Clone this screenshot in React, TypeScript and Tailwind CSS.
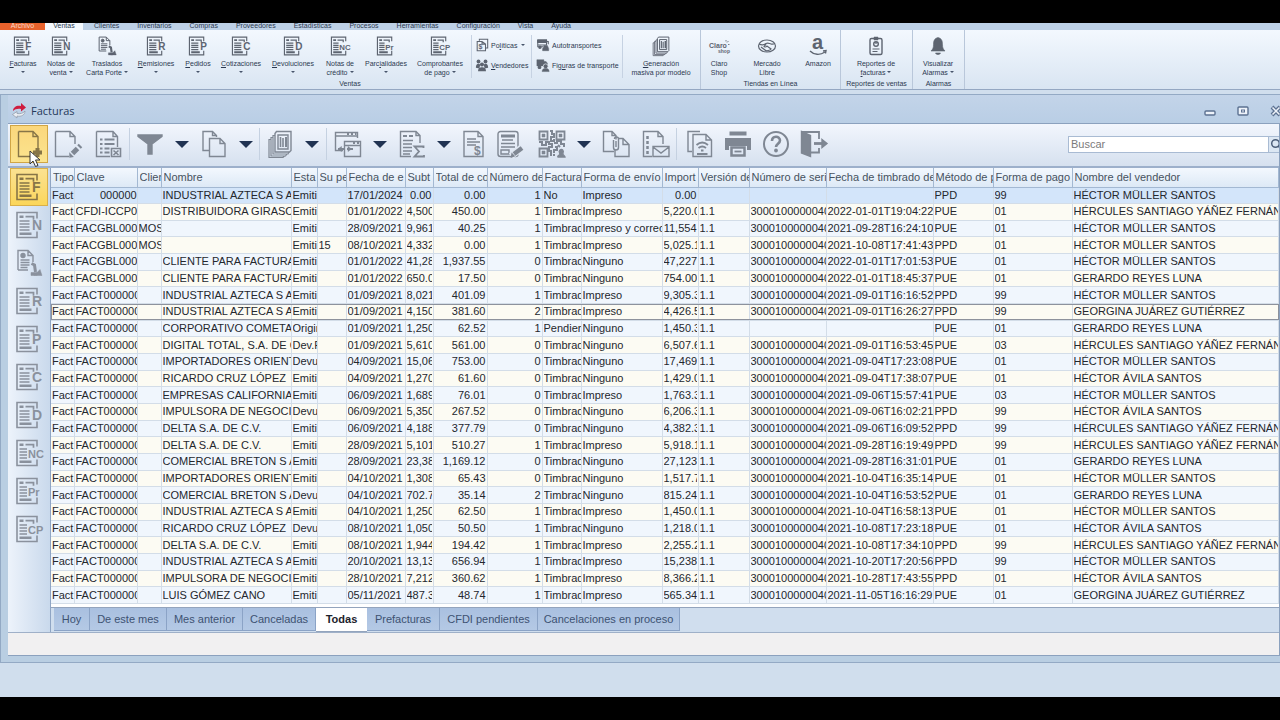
import React from 'react';

const VERSION = '1.1';
const SERIE = '30001000000400';
const MULLER = 'HÉCTOR MÜLLER SANTOS';
const AVILA = 'HÉCTOR ÁVILA SANTOS';
const YANEZ = 'HÉRCULES SANTIAGO YÁÑEZ FERNÁN';
const LUNA = 'GERARDO REYES LUNA';
const JUAREZ = 'GEORGINA JUÁREZ GUTIÉRREZ';
const CLAVE = 'FACT000000';

const columns = [
  { label: 'Tipo', width: 'w-[23px]' },
  { label: 'Clave', width: 'w-[63px]' },
  { label: 'Clien', width: 'w-[24px]' },
  { label: 'Nombre', width: 'w-[130px]' },
  { label: 'Esta', width: 'w-[26px]' },
  { label: 'Su pe', width: 'w-[29px]' },
  { label: 'Fecha de e', width: 'w-[59px]' },
  { label: 'Subt', width: 'w-[28px]', right: true },
  { label: 'Total de co', width: 'w-[54px]', right: true },
  { label: 'Número de', width: 'w-[55px]', right: true },
  { label: 'Factura', width: 'w-[39px]' },
  { label: 'Forma de envío d', width: 'w-[81px]' },
  { label: 'Import', width: 'w-[36px]', right: true },
  { label: 'Versión de', width: 'w-[51px]' },
  { label: 'Número de serie', width: 'w-[77px]' },
  { label: 'Fecha de timbrado de', width: 'w-[107px]' },
  { label: 'Método de p', width: 'w-[60px]' },
  { label: 'Forma de pago', width: 'w-[79px]' },
  { label: 'Nombre del vendedor', width: '' },
];

// clave, cliente, nombre, estatus, pedido, fecha, subtotal, comisiones, almacén, factura, envío, importe, versión, serie, timbrado, método, forma, vendedor
const rows: string[][] = [
  ['        000000', '', 'INDUSTRIAL AZTECA S A', 'Emiti', '', '17/01/2024', '0.00', '0.00', '1', 'No', 'Impreso', '0.00', '', '', '', 'PPD', '99', MULLER],
  ['CFDI-ICCP0', '', 'DISTRIBUIDORA GIRASO', 'Emiti', '', '01/01/2022', '4,500', '450.00', '1', 'Timbrad', 'Impreso', '5,220.0', VERSION, SERIE, '2022-01-01T19:04:22', 'PUE', '01', YANEZ],
  ['FACGBL000', 'MOS', '', 'Emiti', '', '28/09/2021', '9,961', '40.25', '1', 'Timbrad', 'Impreso y correo', '11,554', VERSION, SERIE, '2021-09-28T16:24:10', 'PUE', '01', MULLER],
  ['FACGBL000', 'MOS', '', 'Emiti', '15', '08/10/2021', '4,332', '0.00', '1', 'Timbrad', 'Impreso', '5,025.1', VERSION, SERIE, '2021-10-08T17:41:43', 'PPD', '01', MULLER],
  ['FACGBL000', '', 'CLIENTE PARA FACTURA', 'Emiti', '', '01/01/2022', '41,28', '1,937.55', '0', 'Timbrad', 'Ninguno', '47,227', VERSION, SERIE, '2022-01-01T17:01:53', 'PUE', '01', MULLER],
  ['FACGBL000', '', 'CLIENTE PARA FACTURA', 'Emiti', '', '01/01/2022', '650.0', '17.50', '0', 'Timbrad', 'Ninguno', '754.00', VERSION, SERIE, '2022-01-01T18:45:37', 'PUE', '01', LUNA],
  [CLAVE, '', 'INDUSTRIAL AZTECA S A', 'Emiti', '', '01/09/2021', '8,021', '401.09', '1', 'Timbrad', 'Impreso', '9,305.3', VERSION, SERIE, '2021-09-01T16:16:52', 'PPD', '99', MULLER],
  [CLAVE, '', 'INDUSTRIAL AZTECA S A', 'Emiti', '', '01/09/2021', '4,150', '381.60', '2', 'Timbrad', 'Impreso', '4,426.5', VERSION, SERIE, '2021-09-01T16:26:27', 'PPD', '99', JUAREZ],
  [CLAVE, '', 'CORPORATIVO COMETA', 'Origin', '', '01/09/2021', '1,250', '62.52', '1', 'Pendien', 'Ninguno', '1,450.3', VERSION, '', '', 'PUE', '01', LUNA],
  [CLAVE, '', 'DIGITAL TOTAL, S.A. DE C', 'Dev.P', '', '01/09/2021', '5,610', '561.00', '0', 'Timbrad', 'Ninguno', '6,507.6', VERSION, SERIE, '2021-09-01T16:53:45', 'PUE', '03', YANEZ],
  [CLAVE, '', 'IMPORTADORES ORIENT', 'Devu', '', '04/09/2021', '15,06', '753.00', '0', 'Timbrad', 'Ninguno', '17,469', VERSION, SERIE, '2021-09-04T17:23:08', 'PUE', '01', MULLER],
  [CLAVE, '', 'RICARDO CRUZ LÓPEZ', 'Emiti', '', '04/09/2021', '1,270', '61.60', '0', 'Timbrad', 'Ninguno', '1,429.0', VERSION, SERIE, '2021-09-04T17:38:07', 'PUE', '01', AVILA],
  [CLAVE, '', 'EMPRESAS CALIFORNIA', 'Emiti', '', '06/09/2021', '1,689', '76.01', '0', 'Timbrad', 'Impreso', '1,763.3', VERSION, SERIE, '2021-09-06T15:57:41', 'PUE', '03', MULLER],
  [CLAVE, '', 'IMPULSORA DE NEGOCI', 'Devu', '', '06/09/2021', '5,350', '267.52', '0', 'Timbrad', 'Ninguno', '6,206.3', VERSION, SERIE, '2021-09-06T16:02:21', 'PPD', '99', AVILA],
  [CLAVE, '', 'DELTA S.A. DE C.V.', 'Emiti', '', '06/09/2021', '4,188', '377.79', '0', 'Timbrad', 'Ninguno', '4,382.3', VERSION, SERIE, '2021-09-06T16:09:52', 'PPD', '99', YANEZ],
  [CLAVE, '', 'DELTA S.A. DE C.V.', 'Emiti', '', '28/09/2021', '5,101', '510.27', '1', 'Timbrad', 'Impreso', '5,918.1', VERSION, SERIE, '2021-09-28T16:19:49', 'PPD', '99', YANEZ],
  [CLAVE, '', 'COMERCIAL BRETON S A', 'Emiti', '', '28/09/2021', '23,38', '1,169.12', '0', 'Timbrad', 'Ninguno', '27,123', VERSION, SERIE, '2021-09-28T16:31:01', 'PUE', '01', LUNA],
  [CLAVE, '', 'IMPORTADORES ORIENT', 'Emiti', '', '04/10/2021', '1,308', '65.43', '0', 'Timbrad', 'Ninguno', '1,517.7', VERSION, SERIE, '2021-10-04T16:35:14', 'PUE', '01', MULLER],
  [CLAVE, '', 'COMERCIAL BRETON S A', 'Devu', '', '04/10/2021', '702.7', '35.14', '2', 'Timbrad', 'Ninguno', '815.24', VERSION, SERIE, '2021-10-04T16:53:52', 'PUE', '01', LUNA],
  [CLAVE, '', 'INDUSTRIAL AZTECA S A', 'Emiti', '', '04/10/2021', '1,250', '62.50', '1', 'Timbrad', 'Impreso', '1,450.0', VERSION, SERIE, '2021-10-04T16:58:13', 'PUE', '01', MULLER],
  [CLAVE, '', 'RICARDO CRUZ LÓPEZ', 'Devu', '', '08/10/2021', '1,050', '50.50', '1', 'Timbrad', 'Ninguno', '1,218.0', VERSION, SERIE, '2021-10-08T17:23:18', 'PUE', '01', AVILA],
  [CLAVE, '', 'DELTA S.A. DE C.V.', 'Emiti', '', '08/10/2021', '1,944', '194.42', '1', 'Timbrad', 'Impreso', '2,255.2', VERSION, SERIE, '2021-10-08T17:34:10', 'PPD', '99', YANEZ],
  [CLAVE, '', 'INDUSTRIAL AZTECA S A', 'Emiti', '', '20/10/2021', '13,13', '656.94', '1', 'Timbrad', 'Impreso', '15,238', VERSION, SERIE, '2021-10-20T17:20:56', 'PPD', '99', MULLER],
  [CLAVE, '', 'IMPULSORA DE NEGOCI', 'Emiti', '', '28/10/2021', '7,212', '360.62', '1', 'Timbrad', 'Impreso', '8,366.2', VERSION, SERIE, '2021-10-28T17:43:55', 'PPD', '01', AVILA],
  [CLAVE, '', 'LUIS GÓMEZ CANO', 'Emiti', '', '05/11/2021', '487.3', '48.74', '1', 'Timbrad', 'Impreso', '565.34', VERSION, SERIE, '2021-11-05T16:16:29', 'PUE', '01', JUAREZ],
];

const menuItems = ['Clientes', 'Inventarios', 'Compras', 'Proveedores', 'Estadísticas', 'Procesos', 'Herramientas', 'Configuración', 'Vista', 'Ayuda'];

const tabs = [
  { label: 'Hoy', width: 'w-[36px]' },
  { label: 'De este mes', width: 'w-[77px]' },
  { label: 'Mes anterior', width: 'w-[76px]' },
  { label: 'Canceladas', width: 'w-[73px]' },
  { label: 'Todas', width: 'w-[51px]', active: true },
  { label: 'Prefacturas', width: 'w-[73px]' },
  { label: 'CFDI pendientes', width: 'w-[98px]' },
  { label: 'Cancelaciones en proceso', width: 'w-[142px]' },
];

const documents = [
  { letters: 'F', lines: ['&Facturas'], arrow: 'below', width: 'w-[38px]' },
  { letters: 'N', lines: ['Notas de', 'venta'], arrow: 'inline', width: 'w-[38px]' },
  { letters: 'truck', lines: ['Traslados', 'Carta Porte'], arrow: 'inline', width: 'w-[54px]' },
  { letters: 'R', lines: ['&Remisiones'], arrow: 'below', width: 'w-[44px]' },
  { letters: 'P', lines: ['&Pedidos'], arrow: 'below', width: 'w-[40px]' },
  { letters: 'C', lines: ['&Cotizaciones'], arrow: 'below', width: 'w-[46px]' },
  { letters: 'D', lines: ['&Devoluciones'], arrow: 'below', width: 'w-[58px]' },
  { letters: 'NC', lines: ['Notas de', 'crédito'], arrow: 'inline', width: 'w-[36px]' },
  { letters: 'Pr', lines: ['Parc&ialidades'], arrow: 'below', width: 'w-[56px]' },
  { letters: 'CP', lines: ['Comprobantes', 'de pago'], arrow: 'inline', width: 'w-[52px]' },
];

/* ---------- icons ---------- */

const Svg: React.FC<{ box?: string; className?: string; children: React.ReactNode }> = ({ box = '0 0 28 28', className = 'w-7 h-7', children }) => (
  <svg viewBox={box} className={`overflow-visible ${className}`} fill="none" stroke="currentColor" strokeWidth="1.4" aria-hidden="true">
    {children}
  </svg>
);

const DocIcon: React.FC<{ letters: string; className?: string }> = ({ letters, className }) => {
  if (letters === 'truck') {
    return (
      <Svg className={className}>
        <path d="M3 21V1.500h10l5 5V13M13 1.500v5h5M3 21h10" />
        <circle cx="8" cy="6.500" r="2" fill="currentColor" />
        <path d="M5.500 11h9M5.500 13.500h9M5.500 16h9M5.500 18.500h7" strokeWidth="1.400" />
        <path d="M16.500 14.500l3 1.500 1 7" strokeWidth="3" />
        <path d="M19 26.500l6-6 2 6z M16 23.500h6v3h-6z" fill="currentColor" strokeWidth="0.5" />
      </Svg>
    );
  }
  const wide = letters.length > 1;
  return (
    <Svg className={className}>
      <path d="M22 7.500V1.500H2v25h20V20.500" strokeWidth="1.600" />
      <path d="M4.500 4.500h4V7h-4zM4.500 21.500h12V24h-12z" fill="currentColor" stroke="none" />
      <path d="M10.500 5.700h8v3" strokeWidth="1.700" />
      <path d={wide ? 'M4.500 10h7.500M4.500 13h7.500M4.500 16h7.500M4.500 19h7.500' : 'M4.500 10h10M4.500 13h10M4.500 16h10M4.500 19h10'} strokeWidth="1.700" />
      <text
        x={wide ? 13 : 17}
        y="19"
        fontSize={wide ? 11 : 14}
        fontWeight="bold"
        fill="currentColor"
        stroke="none"
        fontFamily="Liberation Sans, sans-serif"
      >
        {letters}
      </text>
    </Svg>
  );
};

const NewIcon = () => (
  <Svg>
    <path d="M3.500 1.500H18l5 5v15M18 1.500v5h5M3.500 1.500v25H18" />
    <path d="M18 22.500h9M22.500 18v9" strokeWidth="4" />
  </Svg>
);

const EditIcon = () => (
  <Svg>
    <path d="M1.500 1.500H16l5 5V14M16 1.500v5h5M1.500 1.500v25H15" />
    <path d="M18.500 23.500l5-5" strokeWidth="5" />
    <path d="M25 17l1.500-1.500" strokeWidth="5" />
    <path d="M16 27v-3l2.500 2.500z" fill="currentColor" />
  </Svg>
);

const ListXIcon = () => (
  <Svg>
    <path d="M2.500 1.500H19l4.500 5V17M19 1.500v5h4.500M2.500 1.500v25H16" />
    <path d="M6 9.500h2.500M6 14h2.500M6 18.500h2.500M6 22.500h2.500M10.500 9.500h10M10.500 14h10M10.500 18.500h5M10.500 22.500h5" strokeWidth="2" />
    <path d="M17.500 18.500h9v8h-9zM19.500 20.500l5 4.500M24.500 20.500l-5 4.500" strokeWidth="1.600" />
  </Svg>
);

const FunnelIcon = () => (
  <Svg>
    <path d="M2 5h24v1.500L16 14v10h-4V14L2 6.500z" fill="currentColor" />
  </Svg>
);

const CopyIcon = () => (
  <Svg>
    <path d="M9 20.500H3v-19h9.500l4 4V7M12.500 1.500v4h4" />
    <path d="M9.500 8.500H20l5 5v13H9.500zM20 8.500v5h5" />
  </Svg>
);

const StackIcon: React.FC<{ className?: string }> = ({ className }) => (
  <Svg className={className}>
    <path d="M9 3.500l1.500-2H25v19l-1.500 1.500H9z" />
    <path d="M9 5.500H7V24h15l1-2M7 7.500H5V26h14.500l1.500-2M5 9.500H3V27.500h14l1.500-1.500" strokeWidth="1.200" />
    <path d="M12 5h10v14H12z" strokeWidth="1.400" />
    <path d="M14.500 7v10M17 8v9" strokeWidth="1.600" />
    <path d="M20 7v10" strokeWidth="2" />
  </Svg>
);

const WindowsIcon = () => (
  <Svg>
    <path d="M9 20.500H1.500v-18h22V8M1.500 6h22" />
    <path d="M13 4h2M17 4h2M21 4h1.500M23 13h2M19 13h2" strokeWidth="2" />
    <path d="M10.500 26.500v-15h16v15zM10.500 15.500h16" />
    <path d="M4 19h7M13 19h6" strokeWidth="1.800" />
    <path d="M4 19l3.500-2.500v5zM17.500 19L14 16.500v5z" fill="currentColor" strokeWidth="0.5" />
  </Svg>
);

const SigmaIcon = () => (
  <Svg>
    <path d="M13 26.500H2.500v-25H18l4 4V13M18 1.500v4h4" />
    <path d="M5 6h4M11 6h4" strokeWidth="2" />
    <path d="M5 10.500h10M5 14h9M5 17.500h9M5 21h9M5 24h7" />
    <path d="M25.500 18v-1.500H16.500l4.500 5-4.500 5h9.500V25" strokeWidth="1.800" />
  </Svg>
);

const InvoiceIcon = () => (
  <Svg>
    <path d="M4 1.500h14l5 5v20H4zM18 1.500v5h5" />
    <path d="M7 9h9M7 12h13M7 15h9" />
    <text x="14" y="25" fontSize="12" fontWeight="bold" fill="currentColor" stroke="none" fontFamily="Liberation Sans, sans-serif">$</text>
  </Svg>
);

const FormPenIcon = () => (
  <Svg>
    <rect x="2" y="1.500" width="20" height="25" rx="2.500" />
    <path d="M5 6h14" strokeWidth="3" />
    <path d="M6 10h11M5 13.500h14M5 17h14M5 20h8v4H5z" />
    <path d="M15 26l11-8.500" strokeWidth="7" stroke="#dfe7f2" />
    <path d="M18 24l8-6" strokeWidth="4.500" />
    <path d="M15.500 27l.500-3 2 2z" fill="currentColor" />
  </Svg>
);

const QrIcon = () => (
  <Svg>
    <path d="M1.500 1.500h8v8h-8zM18.500 1.500h8v8h-8zM1.500 18.500h8v8h-8z" strokeWidth="1.800" />
    <path d="M4 4h3v3H4zM21 4h3v3h-3zM4 21h3v3H4z" fill="currentColor" strokeWidth="0.500" />
    <path d="M12 1h2v3h2v3h-3v4h3v-2M1 12h3v3h4v-3h3v2h3v3h-3v4h2v5M16 13h3v-2h4v3h3v3M17 17h2v3h-3v3M15 25h2M20 15l2 2" strokeWidth="2" />
    <path d="M20 27c-1-1 2-2 2-3 0-1-2-2 0-4s4 1 3 3 2 3 2 4z" fill="currentColor" />
  </Svg>
);

const ClipDocsIcon = () => (
  <Svg>
    <path d="M12 21.500H1.500v-20H10l4 4v4M10 1.500v4h4" />
    <path d="M17 8.500h4l6 6v12H13V20M21 8.500v6h6" />
    <path d="M11.500 10v7.500a2.500 2.500 0 005 0V9a2 2 0 00-4 0M14 11v6" />
  </Svg>
);

const MailDocIcon = () => (
  <Svg>
    <path d="M10 26.500H1.500v-25H16l5 5V14M16 1.500v5h5" />
    <path d="M5.500 6v3M5.500 11v3M5.500 16v3M5.500 21v3" strokeWidth="2.500" />
    <path d="M11 16.500h16v10H11zM11 17l8 6 8-6" />
  </Svg>
);

const WifiDocIcon = () => (
  <Svg>
    <path d="M6 21.500H2v-20h12" />
    <path d="M7 4.500h13l5.500 5.500v16.500H7zM20 4.500V10h5.500" />
    <path d="M10.500 15c3.500-3 8-3 11.500 0M12.500 18c2.500-2 5-2 7.500 0" strokeWidth="1.800" />
    <path d="M15 19.500h2.500v2H15zM11 23h10.500v2H11z" fill="currentColor" stroke="none" />
  </Svg>
);

const PrinterIcon = () => (
  <Svg>
    <path d="M5.500 1.500h17v4h-17zM1 8h26v12h-4v-4H5v4H1z" fill="currentColor" stroke="none" />
    <path d="M7.500 17.500h13v8h-13z" strokeWidth="2.500" />
    <path d="M10.500 21.500h7" strokeWidth="1.800" />
  </Svg>
);

const HelpIcon = () => (
  <Svg>
    <circle cx="14" cy="14" r="12" strokeWidth="2" />
    <path d="M10 11c0-5.500 8-5.500 8-.500 0 3-4 3.500-4 6.500" strokeWidth="2.600" />
    <circle cx="14" cy="20.500" r="1.200" fill="currentColor" />
  </Svg>
);

const ExitIcon = () => (
  <Svg>
    <path d="M1.500 1.500l9 4v21l-9-3.500z" fill="currentColor" />
    <path d="M2 2h17v7M10 22.500h9V18" strokeWidth="1.800" />
    <path d="M14 13.500h9" strokeWidth="2.800" />
    <path d="M22 9.500l5 4-5 4z" fill="currentColor" />
  </Svg>
);

const small = 'w-3.5 h-4 shrink-0 text-[#5d6470]';

const PolicyIcon = () => (
  <Svg box="0 0 16 16" className={small}>
    <path d="M5 3V1.500h9.500v10H12" strokeWidth="1.200" />
    <path d="M2.500 4H8l4 3v7.500H2.500zM8 4v3h4" strokeWidth="1.200" />
    <text x="4" y="13" fontSize="8" fontWeight="bold" fill="currentColor" stroke="none" fontFamily="Liberation Sans, sans-serif">$</text>
  </Svg>
);

const PeopleIcon = () => (
  <Svg box="0 0 16 16" className={small}>
    <g fill="currentColor" stroke="none">
      <circle cx="4" cy="4" r="2.200" />
      <circle cx="12" cy="4" r="2.200" />
      <path d="M1 11c0-3 1-4.500 3-4.500l2 1-1 4.500zM15 11c0-3-1-4.500-3-4.500l-2 1 1 4.500z" />
      <circle cx="8" cy="7.500" r="2.300" />
      <path d="M3.500 15c0-3.500 2-4.500 4.500-4.500s4.500 1 4.500 4.500z" />
    </g>
  </Svg>
);

const CarsIcon = () => (
  <Svg box="0 0 16 16" className={small}>
    <path d="M2 2h10v6H2zM12 4h2v3M2 8v2h6" strokeWidth="1.200" />
    <path d="M2 3h10v2H2z" fill="currentColor" />
    <path d="M8 12l1-3.500h4l1.500 3.500v2.500H7.500V12z" fill="currentColor" strokeWidth="0.500" />
    <circle cx="4.500" cy="10.500" r="1.300" fill="currentColor" />
  </Svg>
);

const DriverIcon = () => (
  <Svg box="0 0 16 16" className={small}>
    <path d="M1 2h8v7H1zM9 4h2.500L13 6v3H9z" fill="currentColor" strokeWidth="0.500" />
    <circle cx="4" cy="10.500" r="1.500" fill="currentColor" />
    <circle cx="11" cy="9.500" r="2.800" fill="currentColor" stroke="#e8f0f9" strokeWidth="0.800" />
    <path d="M7 15.500c0-3 2-3.500 4-3.500s4 .500 4 3.500z" fill="currentColor" strokeWidth="0.500" />
  </Svg>
);

const ClaroIcon = () => (
  <Svg box="0 0 20 18" className="w-5 h-[18px]">
    <text x="0" y="11" fontSize="7" fontWeight="bold" fill="currentColor" stroke="none" fontFamily="Liberation Sans, sans-serif">Claro</text>
    <text x="9" y="16" fontSize="5" fontWeight="bold" fill="currentColor" stroke="none" fontFamily="Liberation Sans, sans-serif">shop</text>
    <path d="M17 4.500V3M18 5.500l1.500-1.500M19 7.500h1.500" strokeWidth="0.800" />
  </Svg>
);

const MercadoIcon = () => (
  <Svg box="0 0 20 18" className="w-5 h-[18px]">
    <ellipse cx="10" cy="9" rx="8.500" ry="6" strokeWidth="1.200" />
    <path d="M2 7c3 1.500 5 1 7-.500 2-1 3 0 5 .500s3 0 4-.500M9 7c-1 2-2 2-2 2.500s2 1 3-.500l4 3c-1 1.500-2 1-3 1.500s-2 .500-3-.500L4 10" strokeWidth="1.200" />
  </Svg>
);

const AmazonIcon = () => (
  <Svg box="0 0 18 20" className="w-[18px] h-5">
    <text x="3" y="13" fontSize="20" fontWeight="bold" fill="currentColor" stroke="none" fontFamily="Liberation Sans, sans-serif">a</text>
    <path d="M1 15c4 4 10 4.500 15 1M14 15l3-.500-.500 3" strokeWidth="1.400" />
  </Svg>
);

const ReportIcon = () => (
  <Svg box="0 0 18 20" className="w-[18px] h-5">
    <rect x="3" y="2.500" width="12" height="16" rx="1.500" />
    <path d="M7 1h4v3H7z" fill="currentColor" strokeWidth="0.500" />
    <circle cx="9" cy="8" r="2.300" />
    <path d="M5.500 13h7M5.500 15.500h5M9 8V6" strokeWidth="1.200" />
  </Svg>
);

const BellIcon = () => (
  <Svg box="0 0 18 20" className="w-[18px] h-5">
    <path d="M9 1.500c4 1 4.500 4 4.500 7s.500 4.500 2.500 6.500H2c2-2 2.500-3.500 2.500-6.500s.500-6 4.500-7zM6.500 17h5c-.500 2-4.500 2-5 0z" fill="currentColor" strokeWidth="0.600" />
  </Svg>
);

/* ---------- ribbon ---------- */

// "&" marks the accelerator letter, drawn underlined
const Accel: React.FC<{ text: string }> = ({ text }) => {
  const at = text.indexOf('&');
  if (at < 0) return <>{text}</>;
  return (
    <>
      {text.slice(0, at)}
      <u>{text[at + 1]}</u>
      {text.slice(at + 2)}
    </>
  );
};

const Caret: React.FC<{ className?: string }> = ({ className = '' }) => (
  <span className={`inline-block border-x-2 border-t-2 border-x-transparent border-t-[#47546b] ${className}`}></span>
);

interface RibbonButtonProps {
  icon: React.ReactNode;
  lines: string[];
  arrow?: string;
  width: string;
}

const RibbonButton: React.FC<RibbonButtonProps> = ({ icon, lines, arrow, width }) => (
  <button type="button" className={`${width} shrink-0 flex flex-col items-center whitespace-nowrap`}>
    <span className="h-[22px] flex items-center text-[#5d6470]">{icon}</span>
    <span className="mt-0.5 flex flex-col items-center">
      {lines.map((line, idx) => (
        <span key={line}>
          <Accel text={line} />
          {arrow === 'inline' && idx === lines.length - 1 && <Caret className="ml-0.5 mb-0.5" />}
        </span>
      ))}
      {arrow === 'below' && <Caret className="mt-[3px]" />}
    </span>
  </button>
);

const SmallButton: React.FC<{ icon: React.ReactNode; text: string; arrow?: boolean }> = ({ icon, text, arrow }) => (
  <button type="button" className="flex items-center gap-0.5 h-5 whitespace-nowrap">
    {icon}
    <span>
      <Accel text={text} />
      {arrow && <Caret className="ml-1 mb-0.5" />}
    </span>
  </button>
);

const RibbonGroup: React.FC<{ title: string; width: string; children: React.ReactNode }> = ({ title, width, children }) => (
  <section className={`${width} shrink-0 flex flex-col border-r border-[#b9c7da] pt-[5px]`}>
    <div className="flex flex-1">{children}</div>
    <p className="h-[11px] leading-[11px] text-center">{title}</p>
  </section>
);

const Ribbon = () => (
  <div className="h-[60px] shrink-0 flex overflow-hidden border-b border-[#94a7c2] bg-gradient-to-b from-[#f3f8fe] to-[#d9e5f2] text-[7px] leading-[9px] text-[#2c3950]">
    <RibbonGroup title="Ventas" width="w-[701px]">
      <div className="flex pl-1 pr-[5px]">
        {documents.map((doc) => (
          <RibbonButton
            key={doc.letters}
            icon={<DocIcon letters={doc.letters} className="w-5 h-5" />}
            lines={doc.lines}
            arrow={doc.arrow}
            width={doc.width}
          />
        ))}
      </div>
      <div className="w-[60px] pl-[3px] flex flex-col border-l border-[#c6d2e2]">
        <SmallButton icon={<PolicyIcon />} text="Po&líticas" arrow />
        <SmallButton icon={<PeopleIcon />} text="&Vendedores" />
      </div>
      <div className="w-[92px] pl-1 flex flex-col border-x border-[#c6d2e2]">
        <SmallButton icon={<CarsIcon />} text="Autotransportes" />
        <SmallButton icon={<DriverIcon />} text="Fig&uras de transporte" />
      </div>
      <RibbonButton icon={<StackIcon className="w-5 h-5" />} lines={['&Generación', 'masiva por modelo']} width="w-[76px]" />
    </RibbonGroup>
    <RibbonGroup title="Tiendas en Línea" width="w-[140px]">
      <RibbonButton icon={<ClaroIcon />} lines={['Claro', 'Shop']} width="w-[36px]" />
      <RibbonButton icon={<MercadoIcon />} lines={['Mercado', 'Libre']} width="w-[60px]" />
      <RibbonButton icon={<AmazonIcon />} lines={['Amazon']} width="w-[42px]" />
    </RibbonGroup>
    <RibbonGroup title="Reportes de ventas" width="w-[72px]">
      <RibbonButton icon={<ReportIcon />} lines={['Reportes de', '&facturas']} arrow="inline" width="w-[70px]" />
    </RibbonGroup>
    <RibbonGroup title="Alarmas" width="w-[52px]">
      <RibbonButton icon={<BellIcon />} lines={['Visualizar', 'Alarmas']} arrow="inline" width="w-[50px]" />
    </RibbonGroup>
  </div>
);

const MenuBar = () => (
  <nav className="h-[7px] shrink-0 flex items-end overflow-hidden bg-[#bdd0e6] text-[7px] leading-[9px] text-[#2c3950]">
    <a href="#archivo" className="w-[45px] text-center bg-[#e8622c] text-[#fbd9c8]">Archivo</a>
    <a href="#ventas" className="w-[38px] text-center bg-[#f4f9fe]">Ventas</a>
    <div className="flex pl-0.5">
      {menuItems.map((item) => (
        <a key={item} href={`#${item}`} className="px-[9px]">{item}</a>
      ))}
    </div>
  </nav>
);

/* ---------- document window ---------- */

const ToolButton: React.FC<{ label: string; width?: string; children: React.ReactNode }> = ({ label, width = 'w-10', children }) => (
  <button type="button" aria-label={label} className={`${width} shrink-0 flex items-center justify-center text-[#7f8793]`}>
    {children}
  </button>
);

const DropArrow: React.FC<{ width?: string }> = ({ width = 'w-6' }) => (
  <button type="button" aria-label="Más opciones" className={`${width} shrink-0 flex items-center justify-center`}>
    <span className="border-x-[7px] border-t-[7px] border-x-transparent border-t-[#203352]"></span>
  </button>
);

const Divider: React.FC<{ width?: string }> = ({ width = 'w-0.5' }) => (
  <span className={`${width} shrink-0 flex justify-center`}>
    <span className="w-px my-1 bg-[#c5d1e1]"></span>
  </span>
);

const Toolbar = () => (
  <div className="h-[44px] shrink-0 flex items-stretch border-b-2 border-[#9db0cb] bg-gradient-to-b from-[#f2f6fd] to-[#d6e1ef] pl-0.5 pb-0.5">
    <button type="button" aria-label="Agregar" className="relative w-[38px] my-px shrink-0 flex items-center justify-center border border-[#d0a545] bg-gradient-to-b from-[#fbd77c] to-[#fbe48e] text-[#877547]">
      <NewIcon />
      <svg viewBox="0 0 12 18" className="absolute left-[18px] top-6 w-3 h-[18px] z-10" aria-hidden="true">
        <path d="M1 1v13l3-3 2.500 5.500 2.500-1L6.500 10H11z" fill="#fff" stroke="#333" />
      </svg>
    </button>
    <ToolButton label="Modificar"><EditIcon /></ToolButton>
    <ToolButton label="Cancelar"><ListXIcon /></ToolButton>
    <Divider />
    <ToolButton label="Filtrar"><FunnelIcon /></ToolButton>
    <DropArrow />
    <ToolButton label="Copiar"><CopyIcon /></ToolButton>
    <DropArrow />
    <Divider />
    <ToolButton label="Emisión masiva"><StackIcon /></ToolButton>
    <DropArrow />
    <Divider width="w-1" />
    <ToolButton label="Ajustar columnas"><WindowsIcon /></ToolButton>
    <DropArrow />
    <ToolButton label="Sumatorias"><SigmaIcon /></ToolButton>
    <DropArrow />
    <ToolButton label="Recibir pagos" width="w-9"><InvoiceIcon /></ToolButton>
    <ToolButton label="Campos libres" width="w-9"><FormPenIcon /></ToolButton>
    <ToolButton label="Timbrar" width="w-12"><QrIcon /></ToolButton>
    <DropArrow width="w-4" />
    <ToolButton label="Documentos anexos" width="w-12"><ClipDocsIcon /></ToolButton>
    <ToolButton label="Enviar por correo" width="w-8"><MailDocIcon /></ToolButton>
    <Divider width="w-2" />
    <ToolButton label="Consulta en línea"><WifiDocIcon /></ToolButton>
    <ToolButton label="Imprimir" width="w-9"><PrinterIcon /></ToolButton>
    <ToolButton label="Ayuda"><HelpIcon /></ToolButton>
    <ToolButton label="Cerrar" width="w-9"><ExitIcon /></ToolButton>
    <div className="ml-auto self-center flex h-[17px] overflow-hidden">
      <input
        type="text"
        placeholder="Buscar"
        aria-label="Buscar"
        className="w-[201px] h-[17px] px-0.5 bg-white border border-[#a9bbd3] text-[11px] placeholder:text-[#7b7b7b] outline-none"
      />
      <button type="button" aria-label="Ejecutar búsqueda" className="w-[10px] overflow-hidden border-y border-[#a9bbd3] bg-[#dce7f3] text-[#4d5f7a]">
        <Svg box="0 0 14 14" className="w-3.5 h-3.5">
          <circle cx="6.500" cy="6.500" r="3.800" strokeWidth="1.500" />
          <path d="M9 9l4 4" strokeWidth="1.500" />
        </Svg>
      </button>
    </div>
  </div>
);

const TitleBar = () => (
  <header className="h-[28px] shrink-0 flex items-center bg-gradient-to-b from-[#c3d4e9] to-[#b9cee5] pl-[3px] pt-1">
    <svg viewBox="0 0 16 16" className="w-4 h-4" aria-hidden="true">
      <path d="M2 8c0-4 4-6 8-5V0l5 4.500-5 4V6C7 5.500 4 6 2 8z" fill="#cf1c3f" />
      <path d="M14 8c0 4-4 6-8 5v2l-4.500-3.500L6 8.500v2c3 .500 6 0 8-2.500z" fill="#e9edf3" stroke="#8c96a5" strokeWidth="0.700" />
    </svg>
    <h1 className="ml-1 text-[11px] leading-4 text-[#26395a] [font-family:'Open_Sans',sans-serif]">Facturas</h1>
    <div className="ml-auto flex items-center gap-[21px] text-[#5c7191]">
      <button type="button" aria-label="Minimizar" className="w-3">
        <Svg box="0 0 12 12" className="w-3 h-3">
          <rect x="1" y="6" width="10" height="4" rx="1" fill="#eef3fa" />
        </Svg>
      </button>
      <button type="button" aria-label="Maximizar" className="w-3">
        <Svg box="0 0 12 12" className="w-3 h-3">
          <rect x="1" y="2" width="10" height="8" rx="1" fill="#eef3fa" />
          <rect x="4.500" y="5" width="3" height="2" strokeWidth="1" />
        </Svg>
      </button>
      <button type="button" aria-label="Cerrar ventana" className="w-[10px] overflow-hidden">
        <Svg box="0 0 12 12" className="w-3 h-3">
          <path d="M2 2l8 8M10 2l-8 8" strokeWidth="4" />
          <path d="M2.500 2.500l7 7M9.500 2.500l-7 7" strokeWidth="1.500" stroke="#eef3fa" />
        </Svg>
      </button>
    </div>
  </header>
);

const Sidebar = () => (
  <aside className="w-[43px] shrink-0 flex flex-col pl-0.5 bg-gradient-to-r from-[#edf3fb] to-[#c9d9ec] border-r border-[#8fa5c4]">
    {documents.map((doc, idx) => (
      <button
        key={doc.letters}
        type="button"
        aria-label={doc.lines.join(' ').replace('&', '')}
        className={`w-[38px] h-[38px] shrink-0 flex items-center justify-center border ${idx === 0 ? 'border-[#d9b04a] bg-gradient-to-b from-[#fbe291] to-[#fbd659] text-[#877547]' : 'border-transparent text-[#8a919d]'}`}
      >
        <DocIcon letters={doc.letters} className="w-7 h-7" />
      </button>
    ))}
  </aside>
);

const rowColor = (idx: number) => {
  if (idx === 0) return 'bg-[#d3e5fa]';
  if (idx === 7) return 'bg-[#fcfbf3] outline outline-1 -outline-offset-1 outline-[#8d929c]';
  return idx % 2 === 0 ? 'bg-[#f0f6fd]' : 'bg-[#fcfbf3]';
};

const InvoiceTable = () => (
  <div className="flex-1 min-h-0 overflow-hidden bg-white pb-[3px]">
    <table className="w-full h-full table-fixed border-collapse text-[11px] leading-[15px] text-[#24272d]">
      <thead>
        <tr className="h-[19px] bg-gradient-to-b from-[#f3f8fe] to-[#dde9f6] text-[#47525f]">
          {columns.map((col) => (
            <th key={col.label} scope="col" className={`${col.width} h-[19px] p-0 pl-0.5 border-r border-b border-[#a3b8d2] font-normal text-left`}>
              <div className="overflow-hidden whitespace-nowrap">{col.label}</div>
            </th>
          ))}
        </tr>
      </thead>
      <tbody>
        {rows.map((row, idx) => (
          <tr key={idx} className={rowColor(idx)}>
            {['Fact', ...row].map((cell, c) => (
              <td key={c} className={`p-0 pl-px border-r border-b border-[#d3dde8] ${columns[c].right ? 'text-right pr-px' : ''}`}>
                <div className="overflow-hidden whitespace-pre h-[15px]">{cell}</div>
              </td>
            ))}
          </tr>
        ))}
      </tbody>
    </table>
  </div>
);

const Tabs = () => (
  <div className="h-[25px] shrink-0 flex items-start border-t border-[#93a4bd] bg-[#d0deee] pl-[3px] text-[11px] text-[#3d5272]">
    {tabs.map((tab) => (
      <button
        key={tab.label}
        type="button"
        className={
          tab.active
            ? `${tab.width} shrink-0 h-6 bg-white font-bold text-[#1c222c] border-b border-[#93a4bd]`
            : `${tab.width} shrink-0 h-[23px] whitespace-nowrap bg-gradient-to-b from-[#a9c0e0] to-[#b4c9e5] border-r border-b border-[#8ba3c6]`
        }
      >
        {tab.label}
      </button>
    ))}
  </div>
);

const App: React.FC = () => (
  <div className="h-screen flex flex-col overflow-hidden bg-black py-[23px] [font-family:'Liberation_Sans',sans-serif]">
    <MenuBar />
    <Ribbon />
    <main className="flex-1 min-h-0 flex flex-col bg-[#d0deed] pt-1 pb-[34px]">
      <div className="flex-1 min-h-0 flex flex-col border-y border-l border-[#93a9c4] bg-[#b9cee2] pl-[7px] pb-[6px]">
        <TitleBar />
        <div className="flex-1 min-h-0 flex flex-col border-t border-r border-b border-[#8ba1be]">
          <Toolbar />
          <div className="flex-1 min-h-0 flex">
            <Sidebar />
            <div className="flex-1 min-w-0 flex flex-col">
              <InvoiceTable />
              <Tabs />
            </div>
          </div>
          <footer className="h-[23px] shrink-0 border-t border-[#9fb0c8] bg-[#f1f0f1]"></footer>
        </div>
      </div>
    </main>
  </div>
);

export default App;
